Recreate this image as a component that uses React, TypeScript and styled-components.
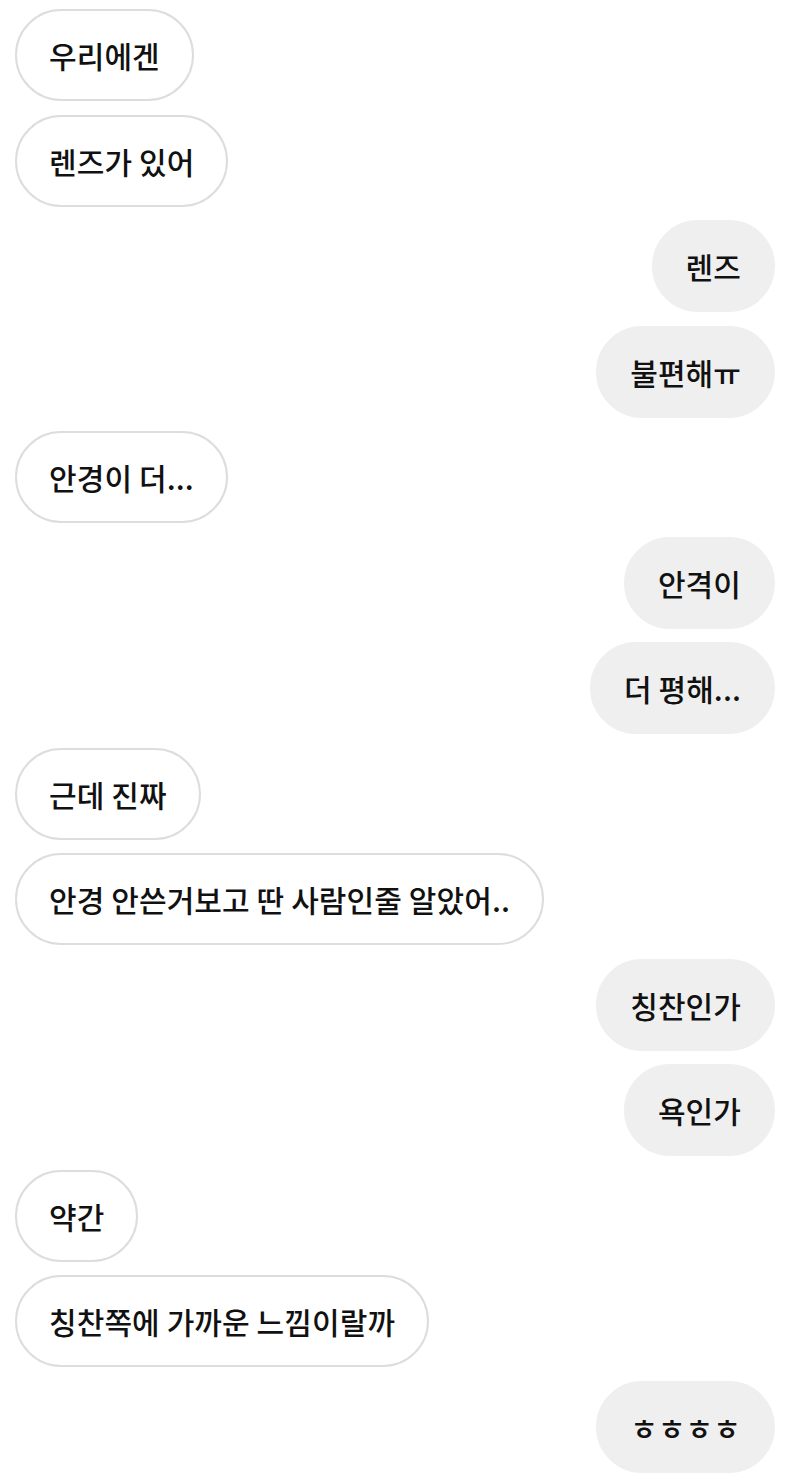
import React from 'react';
import styled, { createGlobalStyle } from 'styled-components';

interface Message {
  text: string;
  mine: boolean;
}

const messages: Message[] = [
  { text: '우리에겐', mine: false },
  { text: '렌즈가 있어', mine: false },
  { text: '렌즈', mine: true },
  { text: '불편해ㅠ', mine: true },
  { text: '안경이 더...', mine: false },
  { text: '안격이', mine: true },
  { text: '더 평해...', mine: true },
  { text: '근데 진짜', mine: false },
  { text: '안경 안쓴거보고 딴 사람인줄 알았어..', mine: false },
  { text: '칭찬인가', mine: true },
  { text: '욕인가', mine: true },
  { text: '약간', mine: false },
  { text: '칭찬쪽에 가까운 느낌이랄까', mine: false },
  { text: 'ㅎㅎㅎㅎ', mine: true },
];

const GlobalStyle = createGlobalStyle`
  html, body {
    margin: 0;
    padding: 0;
    background: #ffffff;
  }
  body {
    font-family: "Noto Sans CJK KR", "Noto Sans", sans-serif;
    color: #111111;
  }
`;

const Chat = styled.div`
  display: flex;
  flex-direction: column;
  gap: 13.5px;
  padding: 9px 25px 0 15px;
`;

const Row = styled.div<{ $mine: boolean }>`
  display: flex;
  justify-content: ${(p) => (p.$mine ? 'flex-end' : 'flex-start')};
`;

const Bubble = styled.div<{ $mine: boolean }>`
  box-sizing: border-box;
  height: 92px;
  padding: 0 32px;
  display: flex;
  align-items: center;
  border-radius: 46px;
  font-size: 30px;
  font-weight: 500;
  white-space: nowrap;
  letter-spacing: 0.1px;
  background: ${(p) => (p.$mine ? '#efefef' : '#ffffff')};
  border: 2px solid ${(p) => (p.$mine ? '#efefef' : '#dddddd')};
`;

const App = () => {
  return (
    <>
      <GlobalStyle />
      <Chat>
        {messages.map((m, i) => (
          <Row key={i} $mine={m.mine}>
            <Bubble $mine={m.mine}>{m.text}</Bubble>
          </Row>
        ))}
      </Chat>
    </>
  );
};

export default App;
